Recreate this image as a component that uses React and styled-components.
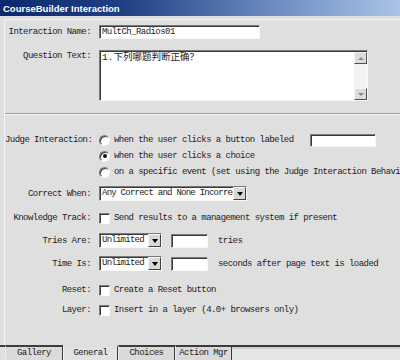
import React from 'react';
import styled, { createGlobalStyle } from 'styled-components';

const GlobalStyle = createGlobalStyle`
  html, body {
    margin: 0;
    padding: 0;
    background: #dfdfdf;
  }
  body {
    width: 400px;
    height: 360px;
    overflow: hidden;
  }
`;

const mono = `"Liberation Mono", "Noto Sans CJK SC", monospace`;

const Window = styled.div`
  width: 400px;
  height: 360px;
  display: flex;
  flex-direction: column;
  background: #dfdfdf;
  font-family: ${mono};
  font-size: 9px;
  letter-spacing: -0.55px;
  color: #1c1c1c;
  overflow: hidden;
`;

const TitleBar = styled.div`
  height: 16px;
  flex-shrink: 0;
  display: flex;
  align-items: center;
  padding-left: 3px;
  background: linear-gradient(90deg, #0b2a6e 0%, #1f3f84 30%, #6f8fc4 70%, #aac3e6 100%);
  color: #fff;
  font: bold 9.5px "Liberation Sans", Arial, sans-serif;
  letter-spacing: 0;
`;

const Body = styled.div`
  flex: 1;
  margin: 3px 0 0 4px;
  border-top: 1px solid #f3f3f3;
  border-left: 1px solid #f3f3f3;
  padding-top: 5px;
  min-height: 0;
`;

const Field = styled.div`
  display: grid;
  grid-template-columns: 86px minmax(0, 1fr);
  column-gap: 8px;
  align-items: ${p => (p.$top ? 'start' : 'center')};
  margin-top: ${p => p.$mt || 0}px;
`;

const Label = styled.div`
  text-align: right;
  white-space: nowrap;
  line-height: ${p => p.$lh || 14}px;
`;

const Control = styled.div`
  display: flex;
  align-items: center;
  gap: ${p => p.$gap || 4}px;
  white-space: nowrap;
  height: ${p => p.$h || 14}px;
`;

const Options = styled.div`
  display: flex;
  flex-direction: column;
`;

const TextInput = styled.input`
  width: ${p => p.$w}px;
  height: ${p => p.$h || 14}px;
  box-sizing: border-box;
  margin: 0 ${p => p.$mr || 0}px 0 ${p => p.$ml || 0}px;
  padding: 0 2px;
  background: #fff;
  border: 1px solid;
  border-color: #7a7a7a #f8f8f8 #f8f8f8 #7a7a7a;
  box-shadow: inset 1px 1px #3a3a3a;
  font: inherit;
  letter-spacing: inherit;
  color: inherit;
  outline: none;
  flex-shrink: 0;
`;

const TextArea = styled.div`
  width: 269px;
  height: 51px;
  box-sizing: border-box;
  display: flex;
  background: #fff;
  border: 1px solid;
  border-color: #7a7a7a #f8f8f8 #f8f8f8 #7a7a7a;
  box-shadow: inset 1px 1px #3a3a3a;
`;

const AreaText = styled.div`
  flex: 1;
  padding: 1px 2px 0;
  font-size: 9.5px;
  letter-spacing: 0;
  line-height: 12px;
`;

const ScrollBar = styled.div`
  width: 13px;
  margin: 1px 0 0;
  display: flex;
  flex-direction: column;
  justify-content: space-between;
  background: #f4f4f4;
`;

const ScrollBtn = styled.div`
  height: 12px;
  box-sizing: border-box;
  background: #dcdcdc;
  border: 1px solid;
  border-color: #f6f6f6 #505050 #505050 #f6f6f6;
  display: flex;
  align-items: center;
  justify-content: center;

  &::after {
    content: '';
    width: 0;
    height: 0;
    border-left: 3px solid transparent;
    border-right: 3px solid transparent;
    ${p => (p.$down ? 'border-top: 3px solid #8a8a8a;' : 'border-bottom: 3px solid #8a8a8a;')}
  }
`;

const Separator = styled.div`
  margin-top: 12px;
  border-top: 1px solid #9c9c9c;
  border-bottom: 1px solid #fafafa;
`;

const Radio = styled.span`
  width: 11px;
  height: 11px;
  box-sizing: border-box;
  border-radius: 50%;
  border: 1px solid;
  border-color: #7a7a7a #f8f8f8 #f8f8f8 #7a7a7a;
  background: #fff;
  box-shadow: inset 1px 1px #3a3a3a;
  display: flex;
  align-items: center;
  justify-content: center;
  flex-shrink: 0;

  &::after {
    content: '';
    width: 4px;
    height: 4px;
    border-radius: 50%;
    background: #111;
    display: ${p => (p.$checked ? 'block' : 'none')};
  }
`;

const Check = styled.span`
  width: 11px;
  height: 11px;
  box-sizing: border-box;
  border: 1px solid;
  border-color: #7a7a7a #f8f8f8 #f8f8f8 #7a7a7a;
  background: #fff;
  box-shadow: inset 1px 1px #3a3a3a;
  flex-shrink: 0;
`;

const Select = styled.div`
  width: ${p => p.$w}px;
  height: 15px;
  box-sizing: border-box;
  display: flex;
  flex-shrink: 0;
  background: #fff;
  border: 1px solid;
  border-color: #7a7a7a #f8f8f8 #f8f8f8 #7a7a7a;
  box-shadow: inset 1px 1px #3a3a3a;
`;

const SelectText = styled.span`
  flex: 1;
  min-width: 0;
  overflow: hidden;
  padding: 0 0 0 2px;
  line-height: 13px;
  letter-spacing: -0.75px;
  white-space: nowrap;
`;

const SelectBtn = styled.span`
  width: 13px;
  flex-shrink: 0;
  box-sizing: border-box;
  background: #d8d8d8;
  border: 1px solid;
  border-color: #f6f6f6 #404040 #404040 #f6f6f6;
  display: flex;
  align-items: center;
  justify-content: center;

  &::after {
    content: '';
    width: 0;
    height: 0;
    border-left: 3.5px solid transparent;
    border-right: 3.5px solid transparent;
    border-top: 4px solid #000;
  }
`;

const TabStrip = styled.div`
  height: 15px;
  flex-shrink: 0;
  display: flex;
`;

const TabLead = styled.div`
  width: 5px;
  border-top: 2px solid #3c3c3c;
`;

const Tab = styled.div`
  width: ${p => p.$w}px;
  box-sizing: border-box;
  border-top: ${p => (p.$active ? '2px solid #dfdfdf' : '2px solid #3c3c3c')};
  border-left: 1px solid ${p => (p.$active ? '#f4f4f4' : '#ececec')};
  border-right: 1px solid #3c3c3c;
  background: ${p => (p.$active ? '#e2e2e2' : '#dadada')};
  display: flex;
  align-items: center;
  justify-content: center;
  white-space: nowrap;
  padding-bottom: 1px;
`;

const TabFiller = styled.div`
  flex: 1;
  border-top: 2px solid #3c3c3c;
  background: linear-gradient(#cfcfcf 0 2px, #e6e6e6 2px);
`;

const tabs = [
  { name: 'Gallery', w: 58 },
  { name: 'General', w: 55, active: true },
  { name: 'Choices', w: 57 },
  { name: 'Action Mgr', w: 57 },
];

export default function App() {
  return (
    <>
      <GlobalStyle />
      <Window>
        <TitleBar>CourseBuilder Interaction</TitleBar>
        <Body>
          <Field>
            <Label>Interaction Name:</Label>
            <Control>
              <TextInput $w={161} readOnly value="MultCh_Radios01" />
            </Control>
          </Field>

          <Field $top $mt={11}>
            <Label $lh={12}>Question Text:</Label>
            <TextArea>
              <AreaText>1.下列哪题判断正确？</AreaText>
              <ScrollBar>
                <ScrollBtn />
                <ScrollBtn $down />
              </ScrollBar>
            </TextArea>
          </Field>

          <Separator />

          <Field $top $mt={17}>
            <Label $lh={16}>Judge Interaction:</Label>
            <Options>
              <Control $h={16}>
                <Radio />
                when the user clicks a button labeled
                <TextInput $w={66} $h={13} $ml={13} readOnly value="" />
              </Control>
              <Control $h={16}>
                <Radio $checked />
                when the user clicks a choice
              </Control>
              <Control $h={16}>
                <Radio />
                on a specific event (set using the Judge Interaction Behavior)
              </Control>
            </Options>
          </Field>

          <Field $mt={6}>
            <Label>Correct When:</Label>
            <Control $h={15}>
              <Select $w={148}>
                <SelectText>Any Correct and None Incorrect</SelectText>
                <SelectBtn />
              </Select>
            </Control>
          </Field>

          <Field $mt={10}>
            <Label>Knowledge Track:</Label>
            <Control>
              <Check />
              Send results to a management system if present
            </Control>
          </Field>

          <Field $mt={8}>
            <Label>Tries Are:</Label>
            <Control $h={15} $gap={9}>
              <Select $w={63}>
                <SelectText>Unlimited</SelectText>
                <SelectBtn />
              </Select>
              <TextInput $w={37} $mr={1} readOnly value="" />
              tries
            </Control>
          </Field>

          <Field $mt={8}>
            <Label>Time Is:</Label>
            <Control $h={15} $gap={9}>
              <Select $w={63}>
                <SelectText>Unlimited</SelectText>
                <SelectBtn />
              </Select>
              <TextInput $w={37} $mr={1} readOnly value="" />
              seconds after page text is loaded
            </Control>
          </Field>

          <Field $mt={12}>
            <Label>Reset:</Label>
            <Control>
              <Check />
              Create a Reset button
            </Control>
          </Field>

          <Field $mt={6}>
            <Label>Layer:</Label>
            <Control>
              <Check />
              Insert in a layer (4.0+ browsers only)
            </Control>
          </Field>
        </Body>

        <TabStrip>
          <TabLead />
          {tabs.map(t => (
            <Tab key={t.name} $w={t.w} $active={t.active}>
              {t.name}
            </Tab>
          ))}
          <TabFiller />
        </TabStrip>
      </Window>
    </>
  );
}
